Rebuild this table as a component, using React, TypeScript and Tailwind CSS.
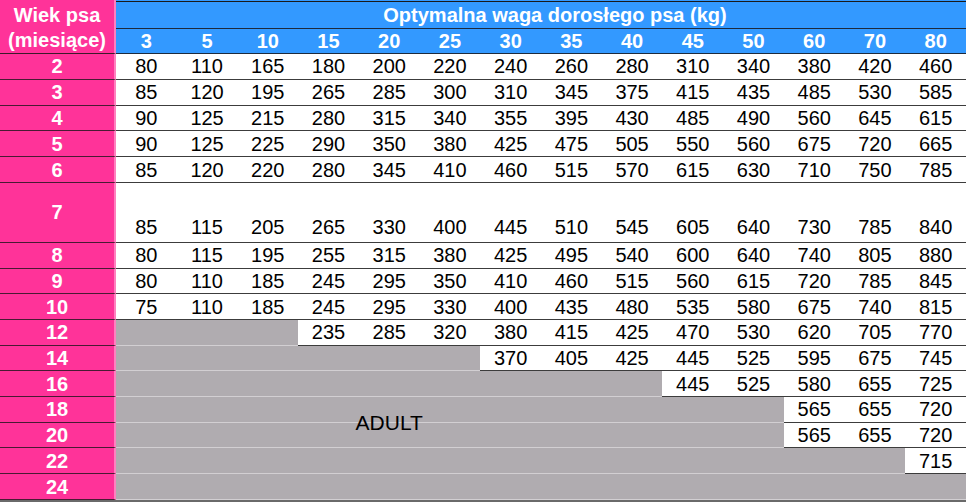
import React from "react";

const weights = [3, 5, 10, 15, 20, 25, 30, 35, 40, 45, 50, 60, 70, 80];

type Row = { age: string; grey: number; vals: number[]; tall?: boolean };

const rows: Row[] = [
  { age: "2", grey: 0, vals: [80, 110, 165, 180, 200, 220, 240, 260, 280, 310, 340, 380, 420, 460] },
  { age: "3", grey: 0, vals: [85, 120, 195, 265, 285, 300, 310, 345, 375, 415, 435, 485, 530, 585] },
  { age: "4", grey: 0, vals: [90, 125, 215, 280, 315, 340, 355, 395, 430, 485, 490, 560, 645, 615] },
  { age: "5", grey: 0, vals: [90, 125, 225, 290, 350, 380, 425, 475, 505, 550, 560, 675, 720, 665] },
  { age: "6", grey: 0, vals: [85, 120, 220, 280, 345, 410, 460, 515, 570, 615, 630, 710, 750, 785] },
  { age: "7", grey: 0, tall: true, vals: [85, 115, 205, 265, 330, 400, 445, 510, 545, 605, 640, 730, 785, 840] },
  { age: "8", grey: 0, vals: [80, 115, 195, 255, 315, 380, 425, 495, 540, 600, 640, 740, 805, 880] },
  { age: "9", grey: 0, vals: [80, 110, 185, 245, 295, 350, 410, 460, 515, 560, 615, 720, 785, 845] },
  { age: "10", grey: 0, vals: [75, 110, 185, 245, 295, 330, 400, 435, 480, 535, 580, 675, 740, 815] },
  { age: "12", grey: 3, vals: [235, 285, 320, 380, 415, 425, 470, 530, 620, 705, 770] },
  { age: "14", grey: 6, vals: [370, 405, 425, 445, 525, 595, 675, 745] },
  { age: "16", grey: 9, vals: [445, 525, 580, 655, 725] },
  { age: "18", grey: 11, vals: [565, 655, 720] },
  { age: "20", grey: 11, vals: [565, 655, 720] },
  { age: "22", grey: 13, vals: [715] },
  { age: "24", grey: 14, vals: [] },
];

const spanClass: Record<number, string> = {
  3: "col-span-3",
  6: "col-span-6",
  9: "col-span-9",
  11: "col-span-11",
  13: "col-span-13",
  14: "col-span-14",
};

export default function App() {
  return (
    <div
      className="w-[966px] h-[502px] overflow-hidden bg-white"
      style={{ fontFamily: '"Liberation Sans", Arial, sans-serif' }}
    >
      <div className="relative grid grid-cols-[116px_repeat(14,1fr)] grid-rows-[29px_25px_repeat(5,25.8px)_60px_repeat(10,25.7px)] border-b-2 border-[#6a6a6a]">
        {/* header left */}
        <div className="row-span-2 bg-[#ff3399] border-r-2 border-[#ff80bf] border-b border-b-[#3a1a2a] flex flex-col items-center justify-center text-white font-bold text-[20px] leading-[25px] pt-[2px]">
          <div>Wiek psa</div>
          <div>(miesiące)</div>
        </div>
        {/* title */}
        <div className="col-span-14 bg-[#3399ff] border-b border-[#1d2a3c] flex flex-col">
          <div className="h-px mt-px bg-[#1a1a1a]" />
          <div className="flex-1 flex items-center justify-center pl-[28px] text-white font-bold text-[20px] leading-none">
            Optymalna waga dorosłego psa (kg)
          </div>
        </div>
        {weights.map((w) => (
          <div
            key={w}
            className="bg-[#3399ff] border-b border-[#1d2a3c] flex items-center justify-center text-white font-bold text-[20px] leading-none"
          >
            {w}
          </div>
        ))}
        {rows.map((r) => (
          <React.Fragment key={r.age}>
            <div className="bg-[#ff3399] border-r-2 border-[#ff80bf] border-b border-b-[#4a1a33] flex items-center justify-center text-white font-bold text-[20px] leading-none">
              {r.age}
            </div>
            {r.grey > 0 && (
              <div className={`${spanClass[r.grey]} bg-[#b0acb0] border-b border-[#d2cfd2]`} />
            )}
            {r.vals.map((v, i) => (
              <div
                key={i}
                className={`bg-white border-b border-[#3c3c3c] flex justify-center text-black text-[20px] leading-none ${
                  r.tall ? "items-end pb-[5px]" : "items-center"
                }`}
              >
                {v}
              </div>
            ))}
          </React.Fragment>
        ))}
        <div className="absolute inset-0 col-start-2 col-end-11 row-start-15 row-end-17 flex items-center justify-center text-black text-[21px] leading-none pointer-events-none">
          ADULT
        </div>
      </div>
    </div>
  );
}
